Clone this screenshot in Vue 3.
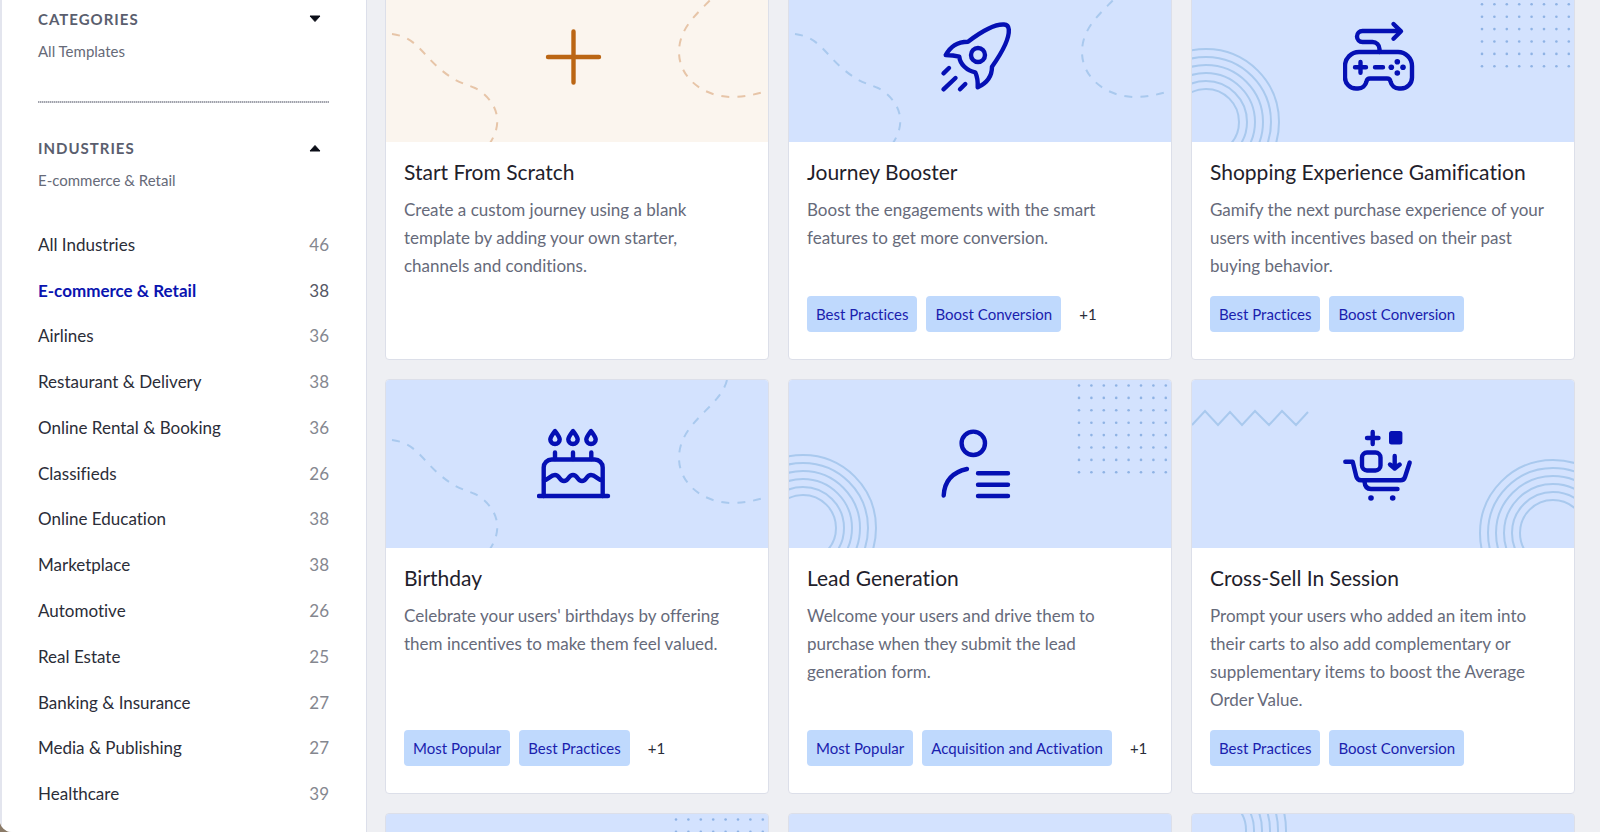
<template>
  <div class="page">
    <aside class="sidebar">
      <button class="section-head" type="button" aria-expanded="false">
        <span>CATEGORIES</span>
        <svg class="caret" viewBox="0 0 12 8"><path d="M1 1H11L6 6.500Z" /></svg>
      </button>
      <p class="section-value">All Templates</p>

      <hr class="divider" />

      <button class="section-head" type="button" aria-expanded="true">
        <span>INDUSTRIES</span>
        <svg class="caret" viewBox="0 0 12 8"><path d="M1 7H11L6 1.500Z" /></svg>
      </button>
      <p class="section-value">{{ selected }}</p>

      <ul class="industries">
        <li v-for="industry in industries" :key="industry.name">
          <button
            type="button"
            class="industry"
            :class="{ active: industry.name === selected }"
            @click="selected = industry.name"
          >
            <span>{{ industry.name }}</span>
            <span class="count">{{ industry.count }}</span>
          </button>
        </li>
      </ul>
    </aside>

    <main class="content">
      <div class="cards">
        <article v-for="card in cards" :key="card.id" class="card">
          <div class="banner" :class="{ scratch: card.icon === 'plus' }">
            <svg class="decor" viewBox="0 0 120 168">
              <path
                v-if="card.left === 'trail'"
                class="dashed"
                d="M6 60C30 63 36 80 54 95S78 109 89 114S123 140 104 169"
              />
              <template v-else-if="card.left === 'rings'">
                <circle v-for="r in ringRadii" :key="r" cx="14" cy="148" :r="r" />
              </template>
              <template v-else-if="card.left === 'rings-top'">
                <circle v-for="r in ringRadii" :key="r" cx="21" cy="16" :r="r" />
              </template>
              <path
                v-else-if="card.left === 'zigzag'"
                d="M0 45L13 31L26 45L38 32L50 45L63 31L77 45L90 31L104 45L116 32"
              />
            </svg>

            <svg class="icon" viewBox="0 0 80 80">
              <path v-if="card.icon === 'plus'" d="M11 39H62M36.500 13.500V64.500" />
              <g v-else-if="card.icon === 'rocket'">
                <path
                  d="M5.700 37C11 28 17 24 28 23.700C42 13 56 6 64 6.500C67 6.700 68.600 8.500 68.800 11.500C69.500 22 61 36 52 48.700C52 59 47 65 37.700 69.300C38 63 37 58 35.300 54.300C27 53 20 46 19.300 38.700C15 37.500 10 37 5.700 37Z"
                />
                <circle cx="38" cy="37" r="7" />
                <path d="M9 50L3.500 55.300M15.500 60L3.500 71.300M25.300 66L20 71.300" />
              </g>
              <g v-else-if="card.icon === 'gamepad'">
                <path
                  d="M16 34H55A14 14 0 0 1 69 48V59.500A11 11 0 0 1 58 70.500H56A9 9 0 0 1 47.500 63.500Q47 60.500 44 60.500H27Q24 60.500 23.500 63.500A9 9 0 0 1 15 70.500H13A11 11 0 0 1 2 59.500V48A14 14 0 0 1 16 34Z"
                />
                <path d="M36.500 34V31A7 7 0 0 0 29.500 24H19.500A5.500 5.500 0 0 1 19.500 13H57" />
                <path d="M50.500 6L58 13.300L50.500 20.700" />
                <path d="M12 49.300H23M17.500 44V54.700M32 49.300H40" />
                <g class="solid">
                  <circle cx="48.300" cy="49.300" r="2.800" />
                  <circle cx="60" cy="49.300" r="2.800" />
                  <circle cx="54.300" cy="43.700" r="2.800" />
                  <circle cx="54.300" cy="55" r="2.800" />
                </g>
              </g>
              <g v-else-if="card.icon === 'cake'">
                <path d="M2 72H71" />
                <path d="M6.700 72V43.500A8 8 0 0 1 14.700 35.500H57.700A8 8 0 0 1 65.700 43.500V72" />
                <path d="M18 28.500V35M36 28.500V35M54.300 28.500V35" />
                <path
                  d="M7 56C12 56 13 51 18 51S22 57 27 57S31 51 36 51S40 57 45 57S49 51 54 51S60 56 65 56"
                />
                <path
                  v-for="x in [0, 18, 36]"
                  :key="x"
                  :transform="`translate(${x} 0)`"
                  d="M18 7C15 11 13.300 13 13.300 15.500A4.700 4.500 0 0 0 22.700 15.500C22.700 13 21 11 18 7Z"
                />
              </g>
              <g v-else-if="card.icon === 'lead'">
                <circle cx="33.300" cy="19.300" r="11.700" />
                <path d="M3.700 71.500C4.500 57 13 48 27 45" />
                <path d="M38 49.300H68M38 60.700H68M38 72H68" />
              </g>
              <g v-else-if="card.icon === 'cart'">
                <path d="M24 14H35.500M29.700 8V20" />
                <rect class="solid" x="46" y="7" width="13.400" height="13.600" rx="2.500" />
                <rect x="19" y="28.500" width="18.500" height="18" rx="5" />
                <path d="M51.700 32V44.500M47 40.500L51.700 44.500L56.700 40.500" />
                <path d="M2.300 37.700H9.700L13.300 52.500Q14.300 56.300 18 56.300H57.500Q61 56.300 62 53L66.700 38.500" />
                <path d="M21.500 57.500Q22 65 28 65H54.500" />
                <g class="solid">
                  <circle cx="28" cy="74" r="2.800" />
                  <circle cx="49.700" cy="74" r="2.800" />
                </g>
              </g>
            </svg>

            <svg class="decor" viewBox="0 0 120 168">
              <path
                v-if="card.right === 'trail'"
                class="dashed"
                d="M79 0C72 28 31 42 31 78C31 104 56 123 84 123C98 123 108 120 120 117"
              />
              <g v-else-if="card.right === 'dots'" class="dots">
                <circle
                  v-for="n in 64"
                  :key="n"
                  :cx="28 + ((n - 1) % 8) * 12.4"
                  :cy="5.5 + Math.floor((n - 1) / 8) * 12.4"
                  r="1.300"
                />
              </g>
              <template v-else-if="card.right === 'rings'">
                <circle v-for="r in ringRadii" :key="r" cx="99" cy="153" :r="r" />
              </template>
            </svg>
          </div>

          <div v-if="card.title" class="body">
            <h2>{{ card.title }}</h2>
            <p>{{ card.text }}</p>
            <div v-if="card.tags" class="tags">
              <span v-for="tag in card.tags" :key="tag" class="tag">{{ tag }}</span>
              <span v-if="card.more" class="more">+{{ card.more }}</span>
            </div>
          </div>
        </article>
      </div>
    </main>
  </div>
</template>

<script setup>
  import { ref } from "vue";

  const selected = ref("E-commerce & Retail");

  const industries = [
    { name: "All Industries", count: 46 },
    { name: "E-commerce & Retail", count: 38 },
    { name: "Airlines", count: 36 },
    { name: "Restaurant & Delivery", count: 38 },
    { name: "Online Rental & Booking", count: 36 },
    { name: "Classifieds", count: 26 },
    { name: "Online Education", count: 38 },
    { name: "Marketplace", count: 38 },
    { name: "Automotive", count: 26 },
    { name: "Real Estate", count: 25 },
    { name: "Banking & Insurance", count: 27 },
    { name: "Media & Publishing", count: 27 },
    { name: "Healthcare", count: 39 },
  ];

  const ringRadii = [33, 41, 49, 57, 65, 73];

  const cards = [
    {
      id: 1,
      icon: "plus",
      left: "trail",
      right: "trail",
      title: "Start From Scratch",
      text: "Create a custom journey using a blank template by adding your own starter, channels and conditions.",
    },
    {
      id: 2,
      icon: "rocket",
      left: "trail",
      right: "trail",
      title: "Journey Booster",
      text: "Boost the engagements with the smart features to get more conversion.",
      tags: ["Best Practices", "Boost Conversion"],
      more: 1,
    },
    {
      id: 3,
      icon: "gamepad",
      left: "rings",
      right: "dots",
      title: "Shopping Experience Gamification",
      text: "Gamify the next purchase experience of your users with incentives based on their past buying behavior.",
      tags: ["Best Practices", "Boost Conversion"],
    },
    {
      id: 4,
      icon: "cake",
      left: "trail",
      right: "trail",
      title: "Birthday",
      text: "Celebrate your users' birthdays by offering them incentives to make them feel valued.",
      tags: ["Most Popular", "Best Practices"],
      more: 1,
    },
    {
      id: 5,
      icon: "lead",
      left: "rings",
      right: "dots",
      title: "Lead Generation",
      text: "Welcome your users and drive them to purchase when they submit the lead generation form.",
      tags: ["Most Popular", "Acquisition and Activation"],
      more: 1,
    },
    {
      id: 6,
      icon: "cart",
      left: "zigzag",
      right: "rings",
      title: "Cross-Sell In Session",
      text: "Prompt your users who added an item into their carts to also add complementary or supplementary items to boost the Average Order Value.",
      tags: ["Best Practices", "Boost Conversion"],
    },
    { id: 7, right: "dots" },
    { id: 8 },
    { id: 9, left: "rings-top" },
  ];
</script>

<style>
  body {
    margin: 0;
    background-color: #8b7b68;
  }
</style>

<style scoped>
  .page {
    display: flex;
    height: 100vh;
    overflow: hidden;
    background-color: #eeeff3;
    border-bottom-left-radius: 12px;
    font-family: Lato, "Liberation Sans", sans-serif;
    font-variant-ligatures: none;
    color: #2b2d38;
  }

  .sidebar {
    display: flex;
    flex-direction: column;
    flex: none;
    box-sizing: border-box;
    width: 367px;
    padding: 9px 37px 15px 36px;
    background-color: #fff;
    border-left: 2px solid #e3e5ee;
    border-right: 1px solid #dcdfea;
  }

  button {
    padding: 0;
    border: 0;
    background: none;
    font-family: inherit;
    font-variant-ligatures: none;
    color: inherit;
    cursor: pointer;
  }

  .section-head {
    display: flex;
    align-items: center;
    justify-content: space-between;
    padding-right: 8px;
    font-size: 15px;
    font-weight: 700;
    line-height: 20px;
    letter-spacing: 1px;
    color: #5a5e6e;
  }

  .caret {
    width: 12px;
    height: 8px;
    fill: #0c0e18;
    stroke: #0c0e18;
    stroke-width: 1;
    stroke-linejoin: round;
  }

  .section-value {
    margin: 12px 0 0;
    font-size: 15px;
    line-height: 20px;
    color: #666a78;
  }

  .divider {
    width: 100%;
    height: 2px;
    margin: 40px 0 35px;
    border: 0;
    background: repeating-linear-gradient(90deg, #a0a2ab 0 1px, #d3d4d9 1px 2px);
  }

  .industries {
    display: grid;
    grid-auto-rows: 1fr;
    flex: 1;
    margin: 32px 0 0;
    padding: 0;
    list-style: none;
  }

  .industry {
    display: flex;
    align-items: center;
    justify-content: space-between;
    width: 100%;
    height: 100%;
    font-size: 17px;
    line-height: 20px;
  }

  .count {
    color: #85878f;
  }

  .industry.active {
    font-weight: 700;
    color: #0a14b0;
  }

  .industry.active .count {
    font-weight: 400;
    color: #555764;
  }

  .content {
    flex: 1;
    min-width: 0;
    padding: 0 25px 0 18px;
  }

  /* the list is scrolled a little past the top of its first row */
  .cards {
    display: grid;
    grid-template-columns: repeat(3, minmax(0, 1fr));
    gap: 19px;
    margin-top: -27px;
  }

  .card {
    display: flex;
    flex-direction: column;
    overflow: hidden;
    background-color: #fff;
    border: 1px solid #dcdfe9;
    border-radius: 4px;
  }

  .banner {
    display: flex;
    align-items: center;
    justify-content: space-between;
    height: 168px;
    background-color: #d3e2fe;
    color: #0510b4;
  }

  .banner.scratch {
    background-color: #fbf5ee;
    color: #bb6614;
  }

  .decor {
    flex: none;
    width: 120px;
    height: 168px;
    fill: none;
    stroke: #a9c9ee;
    stroke-width: 2;
  }

  .scratch .decor {
    stroke: #e7c5a8;
  }

  .dashed {
    stroke-dasharray: 8 8;
  }

  .dots {
    fill: #8fb3e4;
    stroke: none;
  }

  .icon {
    flex: none;
    width: 80px;
    height: 80px;
    fill: none;
    stroke: currentColor;
    stroke-width: 4.4;
    stroke-linecap: round;
    stroke-linejoin: round;
  }

  .solid {
    fill: currentColor;
    stroke: none;
  }

  .body {
    display: flex;
    flex-direction: column;
    flex: 1;
    padding: 18px 24px 27px 18px;
  }

  h2 {
    margin: 0 0 12px;
    font-size: 21px;
    font-weight: 400;
    line-height: 24px;
    color: #1f212b;
  }

  p {
    margin: 0;
  }

  .body p {
    font-size: 17px;
    line-height: 28px;
    color: #666a7a;
  }

  .tags {
    display: flex;
    gap: 9px;
    margin-top: auto;
    padding-top: 16px;
    white-space: nowrap;
  }

  .tag,
  .more {
    padding: 0 9px;
    border-radius: 4px;
    font-size: 15px;
    line-height: 36px;
  }

  .tag {
    background-color: #bfd9fd;
    color: #1a21ae;
  }
</style>
